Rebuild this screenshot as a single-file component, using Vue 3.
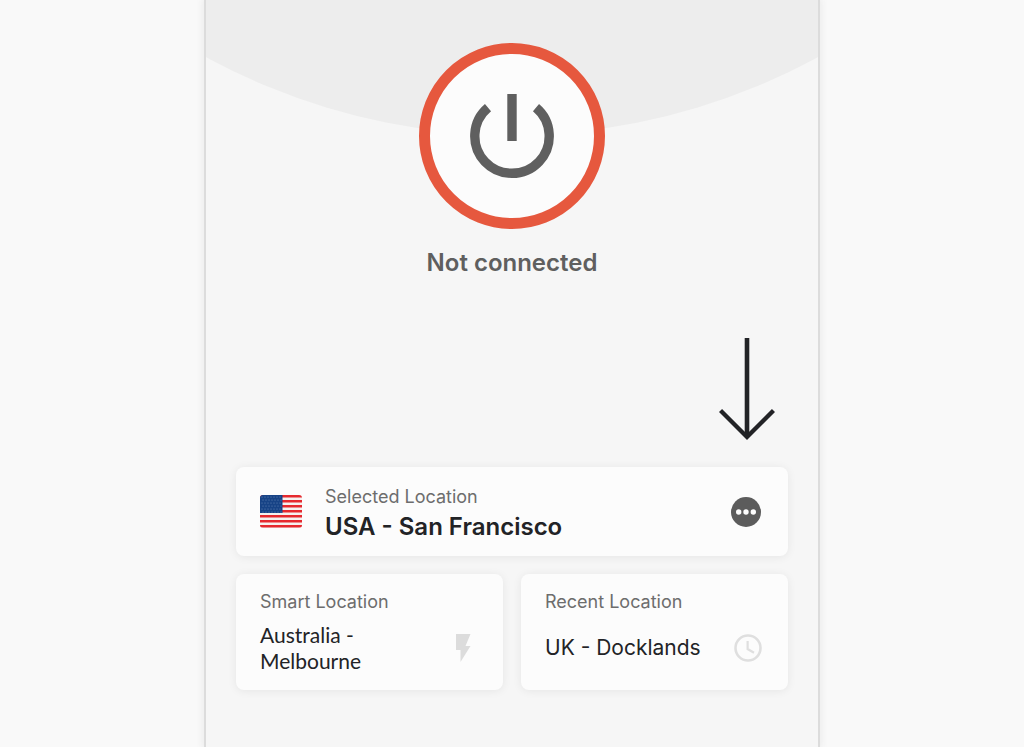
<script setup>
const stripes = [0, 2, 4, 6, 8, 10, 12]
const stars = []
for (let row = 0; row < 6; row++) {
  for (let col = 0; col < 7; col++) {
    stars.push({ x: 2 + col * 3 + (row % 2), y: 2 + row * 3 })
  }
}
</script>

<template>
  <main class="app">
    <svg class="dome" viewBox="0 0 612 135" aria-hidden="true">
      <circle cx="306" cy="-505" r="640" fill="#ededed" />
    </svg>

    <button class="power" type="button" aria-label="Connect">
      <svg width="88" height="88" viewBox="0 0 88 88" fill="none" stroke="#5f5f5f" stroke-width="9.4" aria-hidden="true">
        <path d="M20 15.7A37.2 37.2 0 1 0 68 15.7" />
        <path d="M44 2v47" />
      </svg>
    </button>
    <p class="status">Not connected</p>

    <svg class="arrow" width="56" height="104" viewBox="0 0 56 104" fill="none" stroke="#222326" aria-hidden="true">
      <path d="M28 1v98" stroke-width="4.6" />
      <path d="M1.5 73.5L28 100l26.500-26.500" stroke-width="4.4" />
    </svg>

    <section class="locations">
      <div class="card selected">
        <button class="choice" type="button">
          <svg class="flag" width="42" height="33" viewBox="0 0 42 33" aria-hidden="true">
            <defs><clipPath id="flag-shape"><rect width="42" height="33" rx="3" /></clipPath></defs>
            <g clip-path="url(#flag-shape)">
              <rect width="42" height="33" fill="#f5f1ef" />
              <rect v-for="i in stripes" :key="i" x="0" :y="i * 2.5" width="42" height="2.5" fill="#e6292e" />
              <rect width="22.500" height="18" fill="#174386" />
              <circle v-for="(s, i) in stars" :key="i" :cx="s.x" :cy="s.y" r="0.500" fill="#7694c1" />
            </g>
          </svg>
          <span class="details">
            <span class="label">Selected Location</span>
            <strong class="place">USA - San Francisco</strong>
          </span>
        </button>
        <button class="more" type="button" aria-label="More locations">
          <svg width="30" height="30" viewBox="0 0 30 30" aria-hidden="true">
            <circle cx="15" cy="15" r="15" fill="#5c5c5c" />
            <g fill="#fcfcfc">
              <circle cx="7.700" cy="15" r="2.700" /><circle cx="15" cy="15" r="2.700" /><circle cx="22.300" cy="15" r="2.700" />
            </g>
          </svg>
        </button>
      </div>

      <button class="card shortcut" type="button">
        <span class="label">Smart Location</span>
        <span class="row">
          <span class="name smart">Australia -<br />Melbourne</span>
          <svg class="bolt" width="28" height="28" viewBox="0 0 28 28" aria-hidden="true">
            <path d="M7 0H21.500L16.500 12H21.500L11.500 28V16H7Z" fill="#dcdcdc" />
          </svg>
        </span>
      </button>

      <button class="card shortcut" type="button">
        <span class="label">Recent Location</span>
        <span class="row">
          <span class="name">UK - Docklands</span>
          <svg width="28" height="28" viewBox="0 0 28 28" fill="none" stroke="#dfdfdf" aria-hidden="true">
            <circle cx="14" cy="14" r="12.500" stroke-width="2.600" />
            <path d="M13.600 7V15L20 18.800" stroke-width="2.200" />
          </svg>
        </span>
      </button>
    </section>
  </main>
</template>

<style>
body {
  background: #f9f9f9;
}
</style>

<style scoped>
.app {
  position: relative;
  box-sizing: border-box;
  width: 100%;
  max-width: 612px;
  min-height: 100vh;
  margin: 0 auto;
  padding: 43px 30px 30px;
  display: flex;
  flex-direction: column;
  align-items: center;
  background: #f6f6f6;
  box-shadow: 0 0 0 2px #dcdcdc, 0 0 8px 2px #e6e6e6;
  font-family: Inter, "Liberation Sans", sans-serif;
  color: #222326;
}
.dome {
  position: absolute;
  top: 0;
  left: 0;
  width: 100%;
}
button {
  margin: 0;
  padding: 0;
  border: 0;
  background: none;
  font: inherit;
  color: inherit;
  text-align: left;
  cursor: pointer;
}
svg {
  display: block;
  flex: none;
}
.power {
  position: relative;
  box-sizing: border-box;
  width: 186px;
  height: 186px;
  display: flex;
  align-items: center;
  justify-content: center;
  border: 11px solid #e6583e;
  border-radius: 50%;
  background: #fcfcfc;
}
.status {
  margin: 18px 0 58px;
  font-size: 24px;
  line-height: 32px;
  font-weight: 600;
  color: #5f5f5f;
}
.arrow {
  align-self: flex-end;
  margin-right: 13px;
}
.locations {
  width: 100%;
  margin-top: 26px;
  display: grid;
  grid-template-columns: 1fr 1fr;
  gap: 18px;
}
.card {
  box-sizing: border-box;
  border-radius: 8px;
  background: #fcfcfc;
  box-shadow: 0 1px 10px rgba(0, 0, 0, 0.07);
}
.selected {
  grid-column: 1 / -1;
  padding: 13px 27px 13px 24px;
  display: flex;
  align-items: center;
  justify-content: space-between;
}
.choice {
  display: flex;
  align-items: center;
  gap: 23px;
}
.details {
  padding-top: 5px;
  display: flex;
  flex-direction: column;
  gap: 2px;
}
.label {
  font-size: 18px;
  line-height: 24px;
  color: #6d6d6d;
}
.place {
  font-size: 24px;
  line-height: 32px;
  font-weight: 600;
}
.shortcut {
  padding: 16px 26px 16px 24px;
  display: flex;
  flex-direction: column;
  gap: 8px;
}
.row {
  width: 100%;
  min-height: 52px;
  display: flex;
  align-items: center;
  justify-content: space-between;
}
.name {
  font-size: 21px;
  line-height: 26px;
}
.smart {
  font-family: Lato, "Open Sans", sans-serif;
}
</style>
